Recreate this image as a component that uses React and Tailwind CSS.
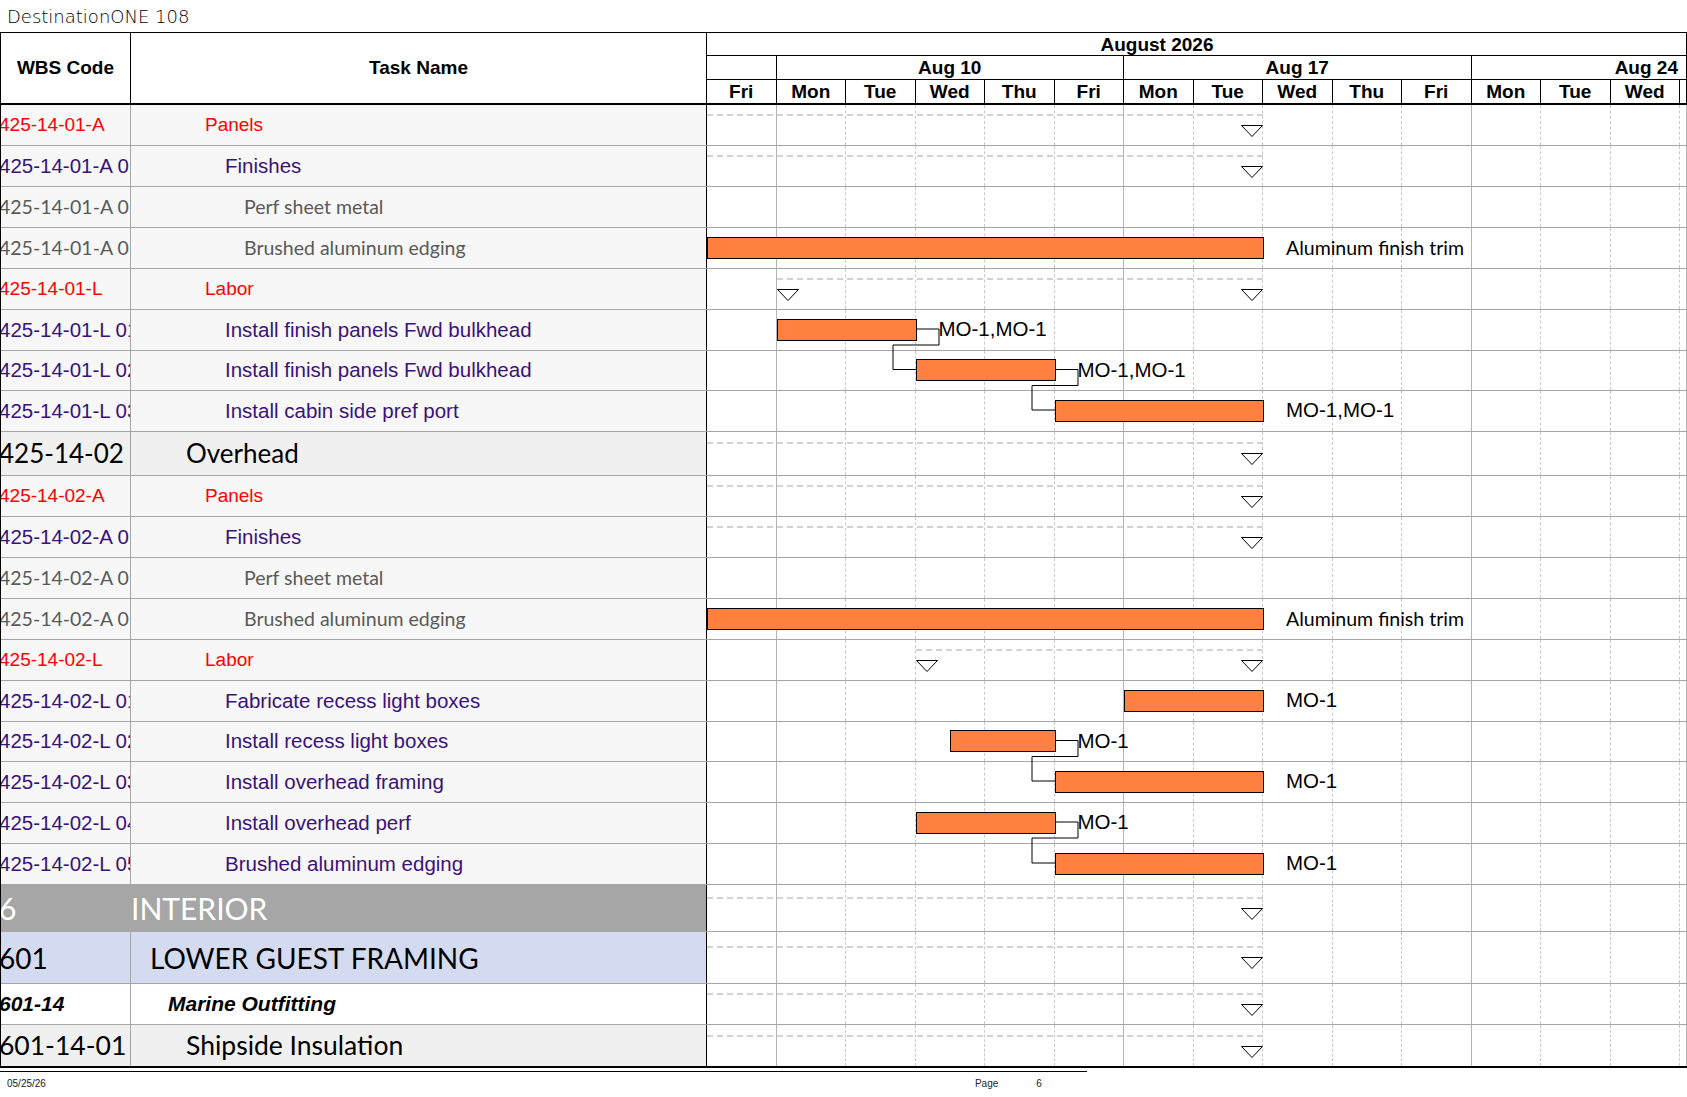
import React from 'react'

const COL = 69.5
const ARIAL = "font-['Liberation_Sans',Arial,sans-serif]"
const LATO = "font-['Lato','Open_Sans',sans-serif]"

const kinds = {
  red: { bg: 'bg-[#f7f7f7]', text: `${ARIAL} text-[19px] text-[#ff0000]`, pad: 'pl-[74px]' },
  purple: { bg: 'bg-[#f7f7f7]', text: `${ARIAL} text-[20.5px] text-[#3a1279]`, pad: 'pl-[94px]' },
  gray: { bg: 'bg-[#f7f7f7]', text: `${LATO} text-[19.5px] text-[#595959]`, pad: 'pl-[113px]' },
  overhead: { bg: 'bg-[#f0f0f0]', text: `${LATO} text-[26px] text-black`, pad: 'pl-[55px]' },
  interior: { bg: 'bg-[#a6a6a6]', text: `${LATO} text-[30px] text-white`, pad: 'pl-0' },
  lower: { bg: 'bg-[#d4dbf1]', text: `${LATO} text-[28px] text-black`, pad: 'pl-[19px]' },
  marine: { bg: 'bg-white', text: `${ARIAL} text-[21px] font-bold italic text-black`, pad: 'pl-[37px]' },
  ship: { bg: 'bg-[#f0f0f0]', text: `${LATO} text-[26.5px] text-black`, pad: 'pl-[55px]' },
}

const heights = {
  40: 'h-[40px]',
  41: 'h-[41px]',
  43: 'h-[43px]',
  44: 'h-[44px]',
  47: 'h-[47px]',
  52: 'h-[52px]',
}

const rows = [
  { code: '425-14-01-A', name: 'Panels', k: 'red', h: 41, sum: { s: null, e: 8 } },
  { code: '425-14-01-A 01', name: 'Finishes', k: 'purple', h: 41, sum: { s: null, e: 8 } },
  { code: '425-14-01-A 01-01', name: 'Perf sheet metal', k: 'gray', h: 41 },
  { code: '425-14-01-A 01-02', name: 'Brushed aluminum edging', k: 'gray', h: 41, bar: { s: 0, e: 8, label: 'Aluminum finish trim', lato: true } },
  { code: '425-14-01-L', name: 'Labor', k: 'red', h: 41, sum: { s: 1, e: 8 } },
  { code: '425-14-01-L 01', name: 'Install finish panels Fwd bulkhead', k: 'purple', h: 41, bar: { s: 1, e: 3, label: 'MO-1,MO-1' }, link: true },
  { code: '425-14-01-L 02', name: 'Install finish panels Fwd bulkhead', k: 'purple', h: 40, bar: { s: 3, e: 5, label: 'MO-1,MO-1' }, link: true },
  { code: '425-14-01-L 03', name: 'Install cabin side pref port', k: 'purple', h: 41, bar: { s: 5, e: 8, label: 'MO-1,MO-1' } },
  { code: '425-14-02', name: 'Overhead', k: 'overhead', h: 44, sum: { s: null, e: 8 } },
  { code: '425-14-02-A', name: 'Panels', k: 'red', h: 41, sum: { s: null, e: 8 } },
  { code: '425-14-02-A 01', name: 'Finishes', k: 'purple', h: 41, sum: { s: null, e: 8 } },
  { code: '425-14-02-A 01-01', name: 'Perf sheet metal', k: 'gray', h: 41 },
  { code: '425-14-02-A 01-02', name: 'Brushed aluminum edging', k: 'gray', h: 41, bar: { s: 0, e: 8, label: 'Aluminum finish trim', lato: true } },
  { code: '425-14-02-L', name: 'Labor', k: 'red', h: 41, sum: { s: 3, e: 8 } },
  { code: '425-14-02-L 01', name: 'Fabricate recess light boxes', k: 'purple', h: 41, bar: { s: 6, e: 8, label: 'MO-1' } },
  { code: '425-14-02-L 02', name: 'Install recess light boxes', k: 'purple', h: 40, bar: { s: 3.5, e: 5, label: 'MO-1' }, link: true },
  { code: '425-14-02-L 03', name: 'Install overhead framing', k: 'purple', h: 41, bar: { s: 5, e: 8, label: 'MO-1' } },
  { code: '425-14-02-L 04', name: 'Install overhead perf', k: 'purple', h: 41, bar: { s: 3, e: 5, label: 'MO-1' }, link: true },
  { code: '425-14-02-L 05', name: 'Brushed aluminum edging', k: 'purple', h: 41, bar: { s: 5, e: 8, label: 'MO-1' } },
  { code: '6', name: 'INTERIOR', k: 'interior', h: 47, sum: { s: null, e: 8 } },
  { code: '601', name: 'LOWER GUEST FRAMING', k: 'lower', h: 52, sum: { s: null, e: 8 } },
  { code: '601-14', name: 'Marine Outfitting', k: 'marine', h: 41, sum: { s: null, e: 8 } },
  { code: '601-14-01', name: 'Shipside Insulation', k: 'ship', h: 43, sum: { s: null, e: 8 }, last: true },
]

const days = ['Fri', 'Mon', 'Tue', 'Wed', 'Thu', 'Fri', 'Mon', 'Tue', 'Wed', 'Thu', 'Fri', 'Mon', 'Tue', 'Wed']
// columns that end a week (next one is a Monday)
const weekEnd = [0, 5, 10]

function Triangle() {
  return (
    <svg width="22" height="12" viewBox="0 0 22 12">
      <polygon points="0.5,0.5 21.5,0.5 11,11.5" fill="white" stroke="black" strokeWidth="1" />
    </svg>
  )
}

function ChartCell({ row }) {
  const mid = row.h / 2
  return (
    <div className="relative w-[980px] h-full border-r border-[#b4b4b4] bg-white">
      <div className="flex h-full">
        <div className="grid grid-cols-[repeat(14,69.5px)] h-full">
          {days.map((d, i) => (
            <div
              key={i}
              className={
                weekEnd.includes(i)
                  ? 'h-full border-r border-[#b4b4b4]'
                  : 'h-full border-r border-dashed border-[#c8c8c8]'
              }
            />
          ))}
        </div>
        <div className="flex-1" />
      </div>

      {row.sum && (
        <>
          <div
            className="absolute border-t-2 border-dashed border-[#d2d2d2]"
            style={{ top: mid - 12, left: (row.sum.s ?? 0) * COL, width: (row.sum.e - (row.sum.s ?? 0)) * COL }}
          />
          {row.sum.s != null && (
            <div className="absolute flex" style={{ top: mid - 1, left: row.sum.s * COL }}>
              <Triangle />
            </div>
          )}
          <div className="absolute flex" style={{ top: mid - 1, left: row.sum.e * COL - 22 }}>
            <Triangle />
          </div>
        </>
      )}

      {row.bar && (
        <>
          <div
            className="absolute h-[22px] bg-[#ff8040] border border-black"
            style={{ top: mid - 12, left: row.bar.s * COL, width: (row.bar.e - row.bar.s) * COL + 1 }}
          />
          <div
            className={`absolute flex items-center h-[22px] whitespace-nowrap text-black leading-none ${row.bar.lato ? `${LATO} text-[19.5px]` : `${ARIAL} text-[20.5px]`}`}
            style={{ top: mid - 12, left: row.bar.e * COL + 23 }}
          >
            {row.bar.label}
          </div>
        </>
      )}
    </div>
  )
}

function Row({ row }) {
  const k = kinds[row.k]
  return (
    <div
      className={`flex ${heights[row.h]} ${row.last ? 'border-b-2 border-black' : 'border-b border-[#a6a6a6]'}`}
    >
      <div className={`w-[130px] h-full flex items-center overflow-hidden border-r border-[#a6a6a6] ${k.bg}`}>
        <span className={`whitespace-nowrap -ml-[2px] ${k.text}`}>{row.code}</span>
      </div>
      <div className={`w-[576px] h-full flex items-center overflow-hidden border-r border-black ${k.bg} ${k.pad}`}>
        <span className={`whitespace-nowrap ${k.text}`}>{row.name}</span>
      </div>
      <ChartCell row={row} />
    </div>
  )
}

function Links() {
  const tops = []
  let y = 0
  rows.forEach((r) => {
    tops.push(y)
    y += r.h
  })
  const lines = []
  rows.forEach((r, i) => {
    if (!r.link) return
    const next = rows[i + 1]
    const E = r.bar.e * COL + 0.5
    const S = next.bar.s * COL + 0.5
    const cP = tops[i] + r.h / 2 - 1.5
    const cS = tops[i + 1] + next.h / 2 - 1.5
    const pts = [
      [E, cP],
      [E + 23, cP],
      [E + 23, cP + 16],
      [S - 23, cP + 16],
      [S - 23, cS],
      [S, cS],
    ]
    lines.push(pts.map((p) => p.join(',')).join(' '))
  })
  return (
    <svg className="absolute top-0 left-[706px] pointer-events-none" width="980" height={y}>
      {lines.map((p, i) => (
        <polyline key={i} points={p} fill="none" stroke="black" strokeWidth="1" />
      ))}
    </svg>
  )
}

function Header() {
  return (
    <div className={`flex h-[72px] border-b-2 border-black ${ARIAL} font-bold text-[19px] text-black`}>
      <div className="w-[130px] h-full flex items-center justify-center border-r border-black">WBS Code</div>
      <div className="w-[576px] h-full flex items-center justify-center border-r border-black">Task Name</div>
      <div className="w-[980px] h-full flex flex-col border-r border-black">
        <div className="h-[23px] flex items-center border-b border-black">
          <div className="w-[900px] text-center leading-none">August 2026</div>
        </div>
        <div className="h-[24px] flex border-b border-black">
          <div className="w-[69.5px] h-full border-r border-black" />
          <div className="w-[347.5px] h-full flex items-center justify-center border-r border-black leading-none">Aug 10</div>
          <div className="w-[347.5px] h-full flex items-center justify-center border-r border-black leading-none">Aug 17</div>
          <div className="flex-1 h-full flex items-center justify-end pr-[8px] leading-none">Aug 24</div>
        </div>
        <div className="h-[23px] flex">
          <div className="grid grid-cols-[repeat(14,69.5px)] h-full">
            {days.map((d, i) => (
              <div key={i} className="h-full flex items-center justify-center border-r border-black leading-none">
                {d}
              </div>
            ))}
          </div>
          <div className="flex-1" />
        </div>
      </div>
    </div>
  )
}

export default function App() {
  return (
    <div className="w-[1687px] h-[1097px] bg-white overflow-hidden">
      <div className="h-[32px] flex items-center pl-[7px] pt-[1px]">
        <span className="font-['DejaVu_Sans',sans-serif] font-extralight text-[18px] text-black leading-none">DestinationONE 108</span>
      </div>

      <div className="border-t border-l border-black">
        <Header />
        <div className="relative">
          {rows.map((r, i) => (
            <Row key={i} row={r} />
          ))}
          <Links />
        </div>
      </div>

      <div className="mt-[3px] h-px w-[1087px] bg-black" />
      <div className={`relative h-[16px] mt-[4px] ${ARIAL} text-[10px] text-[#222] leading-none`}>
        <div className="flex items-center h-full">
          <span className="ml-[7px]">05/25/26</span>
          <span className="ml-[929px]">Page</span>
          <span className="ml-[38px]">6</span>
        </div>
      </div>
    </div>
  )
}
